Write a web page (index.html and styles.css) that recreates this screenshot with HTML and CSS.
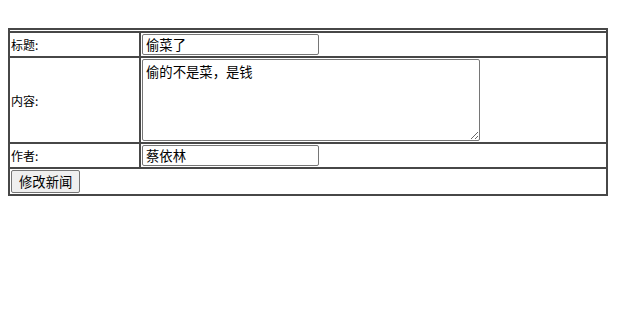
FILE: index.html
```html
<!DOCTYPE html>
<html lang="zh-CN">

<head>
    <meta charset="UTF-8">
    <meta name="viewport" content="width=device-width, initial-scale=1.0">
    <link rel="stylesheet" href="styles.css">
    <title>修改新闻</title>
</head>

<body>
    <form class="news-form" action="#" method="post">
        <table class="news-table">
            <tr class="spacer">
                <td colspan="2"></td>
            </tr>
            <tr>
                <td class="label">标题:</td>
                <td><input class="field" type="text" name="title" value="偷菜了"></td>
            </tr>
            <tr>
                <td class="label">内容:</td>
                <td><textarea class="content" name="content">偷的不是菜，是钱</textarea></td>
            </tr>
            <tr>
                <td class="label">作者:</td>
                <td><input class="field" type="text" name="author" value="蔡依林"></td>
            </tr>
            <tr>
                <td colspan="2"><button class="submit" type="submit">修改新闻</button></td>
            </tr>
        </table>
    </form>
</body>

</html>
```

FILE: styles.css
```css
body {
    margin: 8px;
    background-color: #fff;
    color: #000;
    font-family: "Microsoft YaHei", "Noto Sans CJK SC", sans-serif;
    font-size: 12px;
}

.news-form {
    margin: 0;
    padding-top: 20px;
}

.news-table {
    width: 600px;
    border: 1px solid #474747;
    border-spacing: 0;
}

.news-table td {
    border: 1px solid #474747;
    padding: 1px;
}

.news-table .spacer td {
    padding: 1px 1px 0;
}

.news-table .label {
    width: 127px;
}

.field,
.content,
.submit {
    font-family: "Noto Sans CJK SC", sans-serif;
    font-size: 13.33px;
    color: #000;
    box-sizing: border-box;
    margin: 0;
}

.field {
    display: block;
    width: 177px;
    height: 21px;
    padding: 0 3px;
    border: 1px solid #767676;
    border-radius: 2px;
}

.content {
    display: block;
    width: 338px;
    height: 82px;
    padding: 2px 3px;
    border: 1px solid #767676;
    border-radius: 2px;
    resize: both;
}

.submit {
    display: block;
    height: 23px;
    padding: 0 7px;
    background-color: #efefef;
    border: 1px solid #767676;
    border-radius: 2px;
}
```
